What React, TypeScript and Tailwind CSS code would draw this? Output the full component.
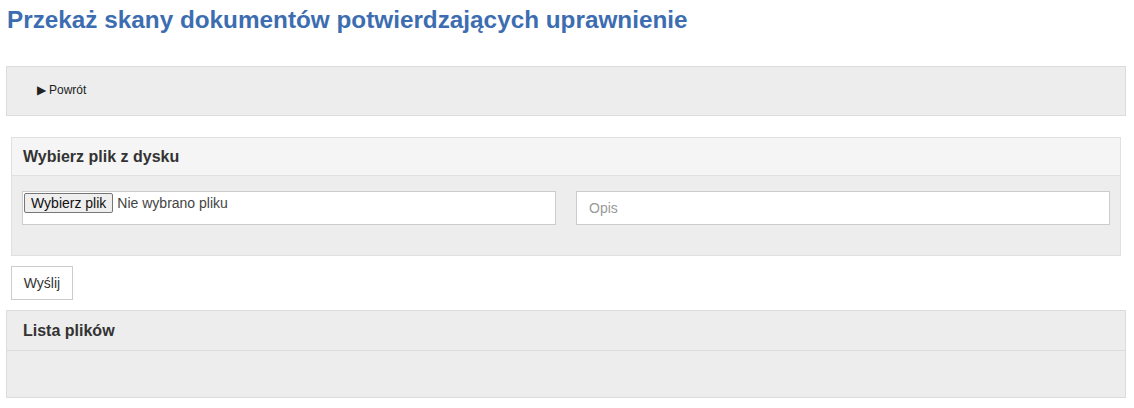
export default function App() {
  return (
    <div className="min-h-[408px] bg-white pl-[6px] pr-[8px] font-['Liberation_Sans',Arial,sans-serif] text-[#333]">
      <h1 className="pl-[1px] pt-[5px] text-[24.3px] font-bold leading-[30px] text-[#3d6db1]">
        Przekaż skany dokumentów potwierdzających uprawnienie
      </h1>

      <div className="mt-[31px] h-[50px] border border-[#dcdcdc] bg-[#ededed] pl-[30px] pt-[14px]">
        <a className="flex items-center gap-[3px] text-[12px] text-[#222]">
          <span className="text-[12px]">▶</span>
          Powrót
        </a>
      </div>

      <div className="mx-[5px] mt-[21px] border border-[#e0e0e0] bg-[#ededed]">
        <div className="flex h-[38px] items-center border-b border-[#e0e0e0] bg-[#f5f5f5] px-[11px]">
          <h3 className="text-[16px] font-bold text-[#333]">Wybierz plik z dysku</h3>
        </div>
        <div className="grid grid-cols-2 pb-[30px] pt-[15px]">
          <div className="px-[10px]">
            <div className="flex h-[34px] items-start border border-[#cccccc] bg-white p-[1px] text-[14px]">
              <span className="rounded-[2px] border border-[#767676] bg-[#efefef] px-[6px] leading-[18px] text-[#111]">
                Wybierz plik
              </span>
              <span className="pl-[4px] leading-[20px] text-[#444]">Nie wybrano pliku</span>
            </div>
          </div>
          <div className="px-[10px]">
            <input
              placeholder="Opis"
              className="h-[34px] w-full border border-[#cccccc] bg-white px-[12px] text-[14px] text-[#555] placeholder:text-[#999] outline-none"
            />
          </div>
        </div>
      </div>

      <button className="ml-[5px] mt-[10px] h-[34px] w-[62px] border border-[#cccccc] bg-white text-[14px] text-[#333]">
        Wyślij
      </button>

      <div className="mt-[10px] border border-[#dcdcdc] bg-[#ededed]">
        <div className="flex h-[40px] items-center border-b border-[#dcdcdc] px-[16px]">
          <h3 className="text-[16px] font-bold text-[#333]">Lista plików</h3>
        </div>
        <div className="h-[46px]" />
      </div>
    </div>
  );
}
